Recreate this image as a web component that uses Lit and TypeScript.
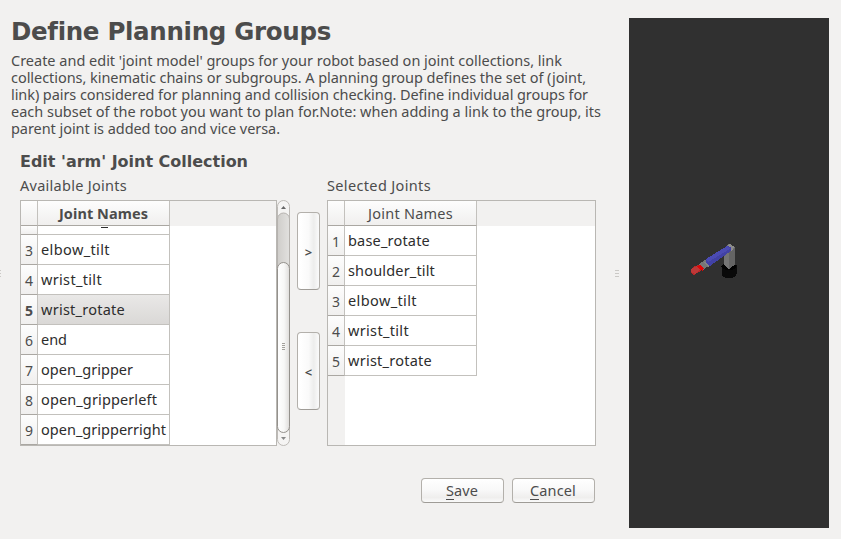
import { LitElement, html, css, svg } from "lit";
import { customElement, property } from "lit/decorators.js";

/* Text that spreads its letter spacing so that it fills a given width. */
@customElement("fit-text")
class FitText extends LitElement {
  @property({ type: Number }) width = 0;
  @property() text = "";
  @property({ type: Boolean }) mnemonic = false;

  static styles = css`
    :host { display: block; white-space: pre; line-height: inherit; }
    .t { display: inline-block; vertical-align: top; position: relative; }
    .m { box-shadow: 0 1px 0 #4c4c4c; display: inline-block; line-height: 17px; height: 17px; }
  `;

  firstUpdated() {
    const el = this.renderRoot.querySelector(".t") as HTMLElement;
    const natural = el.getBoundingClientRect().width;
    el.style.letterSpacing = `${(this.width - natural) / this.text.length}px`;
  }

  render() {
    return this.mnemonic
      ? html`<span class="t"><span class="m">${this.text[0]}</span>${this.text.slice(1)}</span>`
      : html`<span class="t">${this.text}</span>`;
  }
}

type Joint = { n: number; name: string; w: number; on?: boolean };

@customElement("joint-table")
class JointTable extends LitElement {
  @property({ attribute: false }) rows: Joint[] = [];
  @property({ type: Boolean }) scrolled = false;

  static styles = css`
    :host {
      display: block; box-sizing: border-box; height: 246px; border: 1px solid #b9b7b3;
      background: #fff; overflow: hidden; color: #2d2d2d;
    }
    .head { display: flex; height: 25px; background: #f2f1f0; }
    .corner, .title { box-sizing: border-box; height: 25px; border-right: 1px solid #c3c1bd;
      border-bottom: 1px solid #aaa7a2; background: linear-gradient(#fdfdfd, #f0efee); }
    .corner { width: 17px; }
    .title { width: 132px; padding-top: 4px; display: flex; justify-content: center; line-height: 17px; color: #4c4c4c; }
    .bold { font-weight: 700; }
    .body { height: 219px; overflow: hidden; background: linear-gradient(90deg, #f2f1f0 17px, #fff 17px); }
    .row { display: flex; height: 30px; }
    .num, .name { box-sizing: border-box; height: 30px; line-height: 17px; }
    .num { width: 17px; padding-top: 7px; text-align: center; border-right: 1px solid #c3c1bd;
      border-bottom: 1px solid #aaa7a2; background: linear-gradient(#fdfdfd, #f0efee); color: #4c4c4c; font-size: 14px; }
    .name { width: 132px; padding: 6px 0 0 3px; border-right: 1px solid #c3c1bd; border-bottom: 1px solid #c3c1bd; background: #fff; }
    .on .name { background: linear-gradient(#e9e8e7, #dad8d6); }
    .on .num { font-weight: 700; }
    .partial { height: 9px; }
    .partial .num, .partial .name { height: 9px; }
    .dash { width: 7px; height: 1px; margin: -5px 0 0 60px; background: #2d2d2d; }
  `;

  render() {
    return html`
      <div class="head">
        <div class="corner"></div>
        <div class="title ${this.scrolled ? "bold" : ""}">
          <fit-text .width=${this.scrolled ? 89 : 85} text="Joint Names"></fit-text>
        </div>
      </div>
      <div class="body">
        ${this.scrolled
          ? html`<div class="row partial"><div class="num"></div><div class="name"><div class="dash"></div></div></div>`
          : ""}
        ${this.rows.map(
          (r) => html`<div class="row ${r.on ? "on" : ""}">
            <div class="num">${r.n}</div>
            <div class="name"><fit-text .width=${r.w} .text=${r.name}></fit-text></div>
          </div>`
        )}
      </div>`;
  }
}

const INTRO: [string, number][] = [
  ["Create and edit 'joint model' groups for your robot based on joint collections, link", 551],
  ["collections, kinematic chains or subgroups. A planning group defines the set of (joint,", 575],
  ["link) pairs considered for planning and collision checking. Define individual groups for", 577],
  ["each subset of the robot you want to plan for.Note: when adding a link to the group, its", 590],
  ["parent joint is added too and vice versa.", 269],
];

const AVAILABLE: Joint[] = [
  { n: 3, name: "elbow_tilt", w: 69 },
  { n: 4, name: "wrist_tilt", w: 61 },
  { n: 5, name: "wrist_rotate", w: 84, on: true },
  { n: 6, name: "end", w: 26 },
  { n: 7, name: "open_gripper", w: 92 },
  { n: 8, name: "open_gripperleft", w: 116 },
  { n: 9, name: "open_gripperright", w: 125 },
];

const SELECTED: Joint[] = [
  { n: 1, name: "base_rotate", w: 82 },
  { n: 2, name: "shoulder_tilt", w: 87 },
  { n: 3, name: "elbow_tilt", w: 69 },
  { n: 4, name: "wrist_tilt", w: 61 },
  { n: 5, name: "wrist_rotate", w: 84 },
];

@customElement("app-root")
class AppRoot extends LitElement {
  static styles = css`
    :host {
      display: flex; box-sizing: border-box; width: 841px; height: 539px; overflow: hidden;
      background: #f2f1f0; color: #4c4c4c;
      font: 14.5px/17px "Noto Sans", "Open Sans", sans-serif;
    }
    .grip { display: grid; align-content: center; gap: 2px; box-sizing: border-box; padding-top: 7px; height: 539px; }
    .grip i { width: 4px; height: 1px; background: #cbc9c6; }
    .edge { width: 11px; }
    .edge i { width: 1px; }
    .mid { width: 14px; }
    .main { width: 604px; }
    h1 { margin: 17px 0 0; height: 35px; font: 700 24.5px/29px "DejaVu Sans", sans-serif; }
    h2 { margin: 15px 0 0 9px; height: 25px; font: 700 16px/19px "DejaVu Sans", sans-serif; }
    .work { display: flex; margin-left: 9px; }
    .label { height: 23px; }
    .left { width: 257px; }
    .right { width: 269px; }
    .bar { width: 13px; padding-top: 23px; }
    .bar svg { display: block; }
    .moves { width: 23px; margin: 35px 7px 0 7px; display: grid; gap: 42px; align-content: start; }
    button {
      all: unset; box-sizing: border-box; display: flex; align-items: center; justify-content: center;
      border: 1px solid #b3b0ab; border-radius: 4px; border-bottom-color: #9f9c97;
    }
    .move { height: 78px; width: 23px; background: linear-gradient(90deg, #fff 10%, #fafafa 50%, #ededec 75%, #fbfbfb);
      font-weight: 600; font-size: 13px; padding-top: 2px; }
    .actions { display: flex; gap: 8px; margin: 32px 0 0 410px; }
    .act { width: 83px; height: 25px; padding-right: 1px; background: linear-gradient(#fff, #f9f9f9 45%, #efeeed 80%, #fafafa); }
    .view { width: 200px; height: 510px; margin-top: 18px; background: #303030; }
    .view svg { display: block; }
  `;

  scrollbar() {
    return svg`
      <svg width="13" height="246" viewBox="0 0 13 246">
        <defs>
          <linearGradient id="thumb"><stop offset="0" stop-color="#fff"/><stop offset=".55" stop-color="#f7f7f6"/><stop offset="1" stop-color="#dedcda"/></linearGradient>
          <linearGradient id="track"><stop offset="0" stop-color="#cfcdca"/><stop offset="1" stop-color="#e2e1df"/></linearGradient>
        </defs>
        <rect x=".5" y=".5" width="12" height="245" rx="6" fill="#f5f4f3" stroke="#bdbab6"/>
        <path d="M.5 227V19a6 6 0 0 1 12 0V227z" fill="url(#track)" stroke="#b5b2ae"/>
        <rect x=".5" y="62.500" width="12" height="170" rx="6" fill="url(#thumb)" stroke="#94918c"/>
        <path d="M4 9h5L6.500 6z" fill="#666"/>
        <path d="M4 237h5l-2.500 3z" fill="#888"/>
        <path d="M5 143.500h3M5 145.500h3M5 147.500h3M5 149.500h3" stroke="#a3a09b"/>
      </svg>`;
  }

  robot() {
    return svg`
      <svg width="200" height="510" viewBox="629 18 200 510" shape-rendering="crispEdges">
        <path d="M721.500 265v9q0 4 7.500 4t7.500-4v-9z" fill="#090909"/>
        <ellipse cx="729" cy="266.500" rx="7.500" ry="3.500" fill="#000"/>
        <path d="M724 248l5-4 5.500 3v18l-5.500 4-5-4z" fill="#747474"/>
        <path d="M729 251l5.500-3v17l-5.500 4z" fill="#646464"/>
        <path d="M726 247l4-3 4.500 3-3 4z" fill="#8c8c8c"/>
        <path d="M699 264l6-4 5 5-7 5z" fill="#777"/>
        <path d="M704 262l3-1 4 4-3 2z" fill="#858585"/>
        <path d="M706 259l21-13 4 1v4l-21 15-4-3z" fill="#4141a5"/>
        <path d="M706 259l21-13 3 3-22 13z" fill="#4b4bb3"/>
        <path d="M691 270l3-4 5-1 3 4-3 3-5 3-3-2z" fill="#b52727"/>
        <path d="M697 266l3-1 4 3-1 3-3-1z" fill="#e00505"/>
        <path d="M691 269l6-3 3 4-5 4-4-2z" fill="#bd3838"/>
      </svg>`;
  }

  render() {
    return html`
      <div class="grip edge"><i></i><i></i><i></i></div>
      <div class="main">
        <h1><fit-text .width=${319} text="Define Planning Groups"></fit-text></h1>
        ${INTRO.map(([t, w]) => html`<fit-text .width=${w} .text=${t}></fit-text>`)}
        <h2><fit-text .width=${228} text="Edit 'arm' Joint Collection"></fit-text></h2>
        <div class="work">
          <div class="left">
            <div class="label"><fit-text .width=${107} text="Available Joints"></fit-text></div>
            <joint-table scrolled .rows=${AVAILABLE}></joint-table>
          </div>
          <div class="bar">${this.scrollbar()}</div>
          <div class="moves"><button class="move">&gt;</button><button class="move">&lt;</button></div>
          <div class="right">
            <div class="label"><fit-text .width=${104} text="Selected Joints"></fit-text></div>
            <joint-table .rows=${SELECTED}></joint-table>
          </div>
        </div>
        <div class="actions">
          <button class="act"><fit-text mnemonic .width=${32} text="Save"></fit-text></button>
          <button class="act"><fit-text mnemonic .width=${46} text="Cancel"></fit-text></button>
        </div>
      </div>
      <div class="grip mid"><i></i><i></i><i></i></div>
      <div class="view">${this.robot()}</div>`;
  }
}
